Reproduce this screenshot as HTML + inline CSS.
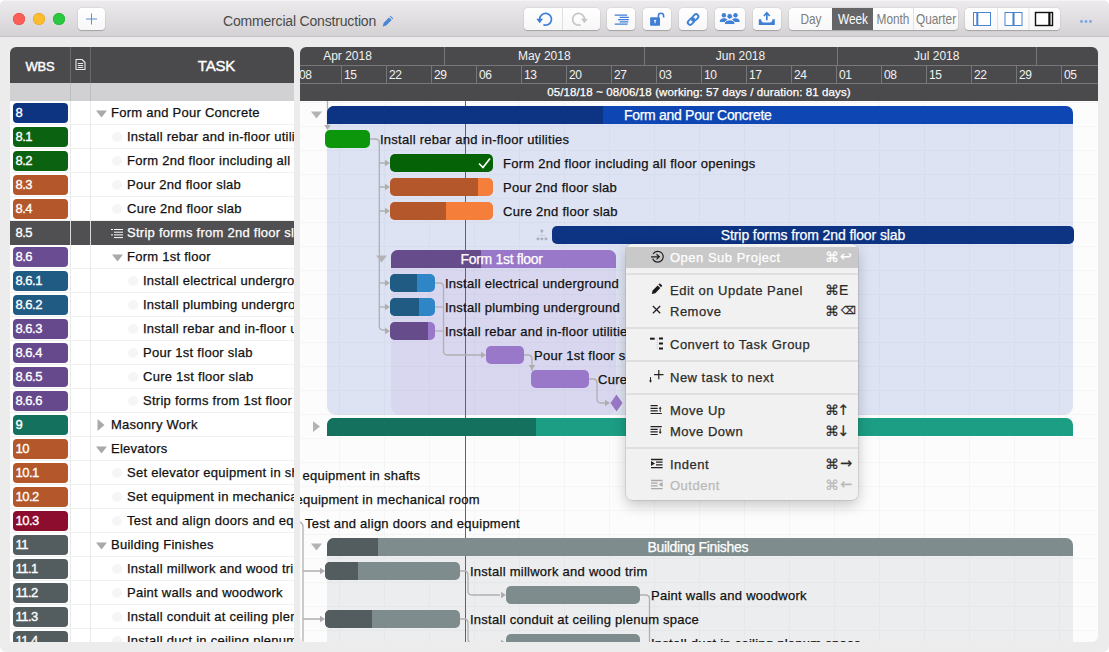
<!DOCTYPE html>
<html lang="en"><head><meta charset="utf-8"><title>Commercial Construction</title>
<style>
*{box-sizing:border-box;margin:0;padding:0}
html,body{width:1109px;height:652px;overflow:hidden;background:#fff}
body{font-family:"Liberation Sans",sans-serif;position:relative;-webkit-font-smoothing:antialiased}
#win{position:absolute;left:0;top:0;width:1109px;height:652px;background:#ececec;border-radius:6px;overflow:hidden}
#tb{position:absolute;left:0;top:0;width:1109px;height:37px;background:linear-gradient(#edebed,#d4d2d4);border-bottom:1px solid #c6c4c6;box-shadow:inset 0 1px 0 #f5f4f5}
.tl{position:absolute;top:12.700px;width:12.200px;height:12.200px;border-radius:50%}
.btn{position:absolute;top:8px;height:22px;background:linear-gradient(#ffffff,#f7f7f7);border-radius:4px;box-shadow:0 .5px 1px rgba(0,0,0,.22),0 0 0 .5px rgba(0,0,0,.06)}
.btn svg{position:absolute;left:0;top:0}
#title{position:absolute;left:223px;top:13px;font-size:14px;color:#4a4a4a;white-space:nowrap;letter-spacing:-.18px}
.seg{position:absolute;top:0;height:22px;line-height:21px;text-align:center;color:#7d7d7d;font-size:15px;white-space:nowrap}
.seg span{position:absolute;left:50%;top:0;transform:translateX(-50%) scaleX(.79);transform-origin:50% 50%}
#lp{position:absolute;left:10px;top:47px;width:284px;height:595px;background:#fff;overflow:hidden;border-radius:6px 6px 0 0}
#lh{position:absolute;left:0;top:0;width:284px;height:36px;background:#4a4a4c}
#lh2{position:absolute;left:0;top:36px;width:284px;height:18px;background:#d1d1d4}
.lrow{position:absolute;left:0;width:284px;height:24px;border-bottom:1px solid #f0f0f0}
.badge{position:absolute;left:3px;top:2px;width:55px;height:20px;border-radius:4px;color:#fff;font-size:13px;line-height:20px;padding-left:2.500px;letter-spacing:-.5px;-webkit-text-stroke:.35px #fff}
.tt{position:absolute;top:0;height:24px;line-height:24px;font-size:13px;color:#111;white-space:nowrap;letter-spacing:.26px;-webkit-text-stroke:.25px currentColor}
.circ{position:absolute;top:7px;width:10px;height:10px;border-radius:50%;background:#f5f5f5}
.vd{position:absolute;top:0;width:1px;background:#e9e9eb}
#gp{position:absolute;left:300px;top:47px;width:798px;height:595px;background:#fcfcfc;overflow:hidden;border-radius:6px 6px 6px 6px}
#gh{position:absolute;left:0;top:0;width:798px;height:54px;background:#4a4a4c}
.mon{position:absolute;top:0;height:18px;line-height:19px;font-size:12px;color:#f2f2f2;white-space:nowrap}
.wk{position:absolute;top:18px;height:18px;line-height:21px;font-size:12px;letter-spacing:-.3px;color:#f2f2f2;white-space:nowrap;border-left:1px solid #77777a;padding-left:2px}
.bar{position:absolute;height:18px;border-radius:5px;overflow:hidden}
.bar i{position:absolute;left:0;top:0;height:18px;display:block}
.gbar{position:absolute;height:18px;border-radius:7px 7px 0 0;overflow:hidden;padding-right:4px;color:#fff;font-size:14px;line-height:19px;text-align:center;white-space:nowrap}
.gbar i{position:absolute;left:0;top:0;height:18px;display:block}
.gbar b{position:relative;font-weight:normal;letter-spacing:-.3px;-webkit-text-stroke:.25px #fff}
.gl{position:absolute;height:24px;line-height:24px;font-size:13px;color:#111;white-space:nowrap;letter-spacing:.26px;-webkit-text-stroke:.25px currentColor}
#menu{position:absolute;left:626px;top:244px;width:232px;height:256px;background:#f1f1f1;border-radius:6px;box-shadow:0 0 0 .5px rgba(0,0,0,.16),0 5px 14px rgba(0,0,0,.22)}
.mi{position:absolute;left:0;width:232px;height:21px;line-height:21px;font-size:13px;color:#2b2b2b;white-space:nowrap}
.mi .t{position:absolute;left:44px;top:0;letter-spacing:.5px;-webkit-text-stroke:.25px currentColor}
.mi .k{position:absolute;left:199px;top:-.5px;font-size:14px;-webkit-text-stroke:.2px currentColor}
.mi .k u{text-decoration:none;font-family:"DejaVu Sans",sans-serif;font-size:14.500px;line-height:21px;position:relative;top:-.5px;font-weight:normal;-webkit-text-stroke:.2px currentColor;margin-left:1px}
.mi .k u.bs{font-size:10.500px;font-weight:normal;top:-1.500px;margin-left:2px;-webkit-text-stroke:.3px currentColor}
.mi .k u.rt{font-size:14px;top:-1px}
.mi .k u.v{margin-left:-2px;top:0}
.ms{position:absolute;left:0;width:232px;height:2px;background:#dfdfdf}
</style></head><body><div id="win">

<div id="tb">
<div class="tl" style="left:13.1px;background:#fc5f57;box-shadow:inset 0 0 0 .5px #e0443e"></div>
<div class="tl" style="left:33.1px;background:#fdbc2e;box-shadow:inset 0 0 0 .5px #dea123"></div>
<div class="tl" style="left:53.1px;background:#29c840;box-shadow:inset 0 0 0 .5px #1aab29"></div>
<div class="btn" style="left:78px;width:27px"><svg width="27" height="22"><path d="M13.500 5.500v11M8 11h11" stroke="#5a8fd9" stroke-width="1" fill="none"/></svg></div>
<div id="title">Commercial Construction</div>
<svg style="position:absolute;left:380.500px;top:14.500px" width="13" height="13" viewBox="0 0 13 13"><path d="M1.800 11.400l.8-3.400L8 2.400l2.700 2.700L5.200 10.600z" fill="#4a86d4"/><path d="M8.800 1.600l.8-.8 2.700 2.700-.8.800z" fill="#4a86d4"/></svg>
<div class="btn" style="left:524px;width:76px"><svg width="76" height="22"><path d="M38.500 0v22" stroke="#e0e0e0" stroke-width="1"/><path d="M15.70 11.30A5.9 5.9 0 1 1 19.39 16.77" stroke="#3f7fd6" stroke-width="1.700" fill="none"/><path d="M12.30 10.70h6.8l-3.4 4.6z" fill="#3f7fd6"/><path d="M60.40 11.30A5.9 5.9 0 1 0 56.71 16.77" stroke="#c6c6c6" stroke-width="1.700" fill="none"/><path d="M57.00 10.70h6.8l-3.4 4.6z" fill="#c6c6c6"/></svg></div>
<div class="btn" style="left:607px;width:28px"><svg width="28" height="22"><path d="M7.700 7.100H20.100M12.600 9.350H21.800M11 11.600H21.800M12.600 13.800H21.300M7.700 16H20.600" stroke="#3f7fd6" stroke-width="1.250" fill="none"/></svg></div>
<div class="btn" style="left:643px;width:28px"><svg width="28" height="22"><rect x="7.100" y="9.300" width="9.900" height="8.400" rx=".8" fill="#3f7fd6"/><path d="M15.400 9.500V7.800a2.600 2.600 0 0 1 5.200 0V9.600" stroke="#3f7fd6" stroke-width="1.600" fill="none"/><path d="M11 12h2.200v1h-.6v2.200h-1v-2.200h-.6z" fill="#fff"/></svg></div>
<div class="btn" style="left:679px;width:28px"><svg width="28" height="22"><g transform="rotate(-45 14.100 11.500)" stroke="#3f7fd6" stroke-width="1.900" fill="none"><rect x="7.600" y="9.200" width="7" height="4.600" rx="2.300"/><rect x="13.600" y="9.200" width="7" height="4.600" rx="2.300"/><path d="M12 11.500h4.200" stroke-width="1.900"/></g></svg></div>
<div class="btn" style="left:715px;width:30px"><svg width="30" height="22"><g fill="#3f7fd6" transform="translate(-.3 -.7)"><circle cx="9.200" cy="8" r="2.200"/><circle cx="20.800" cy="8" r="2.200"/><path d="M5 14.600c0-2.600 2-3.600 4.200-3.600s2.800.6 3.300 1.200v2.400z"/><path d="M25 14.600c0-2.600-2-3.600-4.200-3.600s-2.800.6-3.300 1.200v2.400z"/><circle cx="15" cy="9" r="2.800" stroke="#fbfbfb" stroke-width=".9"/><path d="M9.600 17.200c0-3.400 2.600-4.600 5.400-4.600s5.400 1.200 5.400 4.600z" stroke="#fbfbfb" stroke-width=".9"/></g></svg></div>
<div class="btn" style="left:753px;width:28px"><svg width="28" height="22"><path d="M13.800 12.300V5.500M10.900 8l2.900-3.200L16.700 8" stroke="#3f7fd6" stroke-width="1.700" fill="none"/><path d="M5.800 11.200h2.400q0 3.300 2.600 3.300h6q2.600 0 2.600-3.300h2.400v5.800h-16z" fill="#3f7fd6"/></svg></div>
<div class="btn" style="left:789px;width:169px;overflow:hidden"><div class="seg" style="left:0;width:43px"><span>Day</span></div><div class="seg" style="left:43px;width:41px;background:#656567;color:#fff"><span>Week</span></div><div class="seg" style="left:84px;width:41px;border-right:1px solid #e2e2e2"><span>Month</span></div><div class="seg" style="left:125px;width:44px"><span>Quarter</span></div></div>
<div class="btn" style="left:965px;width:95px"><svg width="95" height="22"><path d="M32.500 0v22M64 0v22" stroke="#e2e2e2" stroke-width="1"/><rect x="8.500" y="4.500" width="17" height="13" fill="#fff" stroke="#4a86d4" stroke-width="1"/><path d="M12.300 5v12" stroke="#3f7fd6" stroke-width="2"/><rect x="40" y="4.500" width="17" height="13" fill="#fff" stroke="#4a86d4" stroke-width="1"/><path d="M48.500 5v12" stroke="#3f7fd6" stroke-width="2"/><rect x="70.500" y="4.500" width="17" height="13" fill="#fff" stroke="#111" stroke-width="1.400"/><path d="M84.400 5v12" stroke="#111" stroke-width="2.200"/></svg></div>
<svg style="position:absolute;left:1078px;top:18px" width="16" height="6"><g fill="#76a8e8"><circle cx="3.500" cy="3.500" r="1.400"/><circle cx="8" cy="3.500" r="1.400"/><circle cx="12.500" cy="3.500" r="1.400"/></g></svg>
</div>
<div id="lp"><div id="lh"></div><div id="lh2"></div>
<div style="position:absolute;left:0;top:0;width:60px;height:36px;line-height:40px;text-align:center;color:#fff;font-size:13px;-webkit-text-stroke:.4px #fff;letter-spacing:-.2px">WBS</div>
<div style="position:absolute;left:156px;top:0;width:101px;height:36px;line-height:38px;text-align:center;color:#fff;font-size:15px;-webkit-text-stroke:.4px #fff;letter-spacing:-.2px">TASK</div>
<svg style="position:absolute;left:64px;top:11px" width="13" height="13" viewBox="0 0 13 13"><path d="M2 1.500h6l3 3v7h-9z" fill="none" stroke="#e8e8e8" stroke-width="1.100" stroke-linejoin="round"/><path d="M3.800 5.500h5.400M3.800 7.500h5.400M3.800 9.500h5.400" stroke="#e8e8e8" stroke-width="1"/></svg>
<div class="vd" style="left:60px;height:36px;background:#6a6a6c"></div><div class="vd" style="left:80px;height:36px;background:#6a6a6c"></div>
<div class="vd" style="left:60px;top:36px;height:18px;background:#bcbcc0"></div><div class="vd" style="left:80px;top:36px;height:18px;background:#bcbcc0"></div>
<div class="vd" style="left:60px;top:54px;height:541px"></div><div class="vd" style="left:80px;top:54px;height:541px"></div>
<div class="lrow" style="top:54px">
<div class="badge" style="background:#0d3481">8</div>
<svg style="position:absolute;left:85.7px;top:8.800px" width="11" height="8"><path d="M0 .5h11L5.500 7.500z" fill="#a9a9a9"/></svg>
<div class="tt" style="left:101px">Form and Pour Concrete</div>
</div>
<div class="lrow" style="top:78px">
<div class="badge" style="background:#0b6311">8.1</div>
<div class="circ" style="left:102px"></div>
<div class="tt" style="left:117px">Install rebar and in-floor utilities</div>
</div>
<div class="lrow" style="top:102px">
<div class="badge" style="background:#0b6311">8.2</div>
<div class="circ" style="left:102px"></div>
<div class="tt" style="left:117px">Form 2nd floor including all floor openings</div>
</div>
<div class="lrow" style="top:126px">
<div class="badge" style="background:#b4572b">8.3</div>
<div class="circ" style="left:102px"></div>
<div class="tt" style="left:117px">Pour 2nd floor slab</div>
</div>
<div class="lrow" style="top:150px">
<div class="badge" style="background:#b4572b">8.4</div>
<div class="circ" style="left:102px"></div>
<div class="tt" style="left:117px">Cure 2nd floor slab</div>
</div>
<div class="lrow" style="top:174px;background:#505052;border-bottom-color:#505052">
<div class="badge" style="background:none">8.5</div>
<div class="vd" style="left:60px;height:24px;background:#d8d8d8"></div><div class="vd" style="left:80px;height:24px;background:#d8d8d8"></div>
<svg style="position:absolute;left:101px;top:7px" width="12" height="11"><path d="M3 1.500h9M3 4.200h9M3 6.900h9M3 9.600h9" stroke="#fff" stroke-width="1"/><path d="M0 1.500h2M0 6.900h2" stroke="#fff" stroke-width="1"/></svg>
<div class="tt" style="left:117px;color:#fff">Strip forms from 2nd floor slab</div>
</div>
<div class="lrow" style="top:198px">
<div class="badge" style="background:#6a4c93">8.6</div>
<svg style="position:absolute;left:101.7px;top:8.800px" width="11" height="8"><path d="M0 .5h11L5.500 7.500z" fill="#a9a9a9"/></svg>
<div class="tt" style="left:117px">Form 1st floor</div>
</div>
<div class="lrow" style="top:222px">
<div class="badge" style="background:#1f5b83">8.6.1</div>
<div class="circ" style="left:118px"></div>
<div class="tt" style="left:133px">Install electrical underground</div>
</div>
<div class="lrow" style="top:246px">
<div class="badge" style="background:#1f5b83">8.6.2</div>
<div class="circ" style="left:118px"></div>
<div class="tt" style="left:133px">Install plumbing underground</div>
</div>
<div class="lrow" style="top:270px">
<div class="badge" style="background:#66498c">8.6.3</div>
<div class="circ" style="left:118px"></div>
<div class="tt" style="left:133px">Install rebar and in-floor utilities</div>
</div>
<div class="lrow" style="top:294px">
<div class="badge" style="background:#66498c">8.6.4</div>
<div class="circ" style="left:118px"></div>
<div class="tt" style="left:133px">Pour 1st floor slab</div>
</div>
<div class="lrow" style="top:318px">
<div class="badge" style="background:#66498c">8.6.5</div>
<div class="circ" style="left:118px"></div>
<div class="tt" style="left:133px">Cure 1st floor slab</div>
</div>
<div class="lrow" style="top:342px">
<div class="badge" style="background:#66498c">8.6.6</div>
<div class="circ" style="left:118px"></div>
<div class="tt" style="left:133px">Strip forms from 1st floor slab</div>
</div>
<div class="lrow" style="top:366px">
<div class="badge" style="background:#13715d">9</div>
<svg style="position:absolute;left:87px;top:6px" width="8" height="12"><path d="M.5 0v12L7.500 6z" fill="#a9a9a9"/></svg>
<div class="tt" style="left:101px">Masonry Work</div>
</div>
<div class="lrow" style="top:390px">
<div class="badge" style="background:#b4572b">10</div>
<svg style="position:absolute;left:85.7px;top:8.800px" width="11" height="8"><path d="M0 .5h11L5.500 7.500z" fill="#a9a9a9"/></svg>
<div class="tt" style="left:101px">Elevators</div>
</div>
<div class="lrow" style="top:414px">
<div class="badge" style="background:#b4572b">10.1</div>
<div class="circ" style="left:102px"></div>
<div class="tt" style="left:117px">Set elevator equipment in shafts</div>
</div>
<div class="lrow" style="top:438px">
<div class="badge" style="background:#b4572b">10.2</div>
<div class="circ" style="left:102px"></div>
<div class="tt" style="left:117px">Set equipment in mechanical room</div>
</div>
<div class="lrow" style="top:462px">
<div class="badge" style="background:#8c0d2e">10.3</div>
<div class="circ" style="left:102px"></div>
<div class="tt" style="left:117px">Test and align doors and equipment</div>
</div>
<div class="lrow" style="top:486px">
<div class="badge" style="background:#535d5f">11</div>
<svg style="position:absolute;left:85.7px;top:8.800px" width="11" height="8"><path d="M0 .5h11L5.500 7.500z" fill="#a9a9a9"/></svg>
<div class="tt" style="left:101px">Building Finishes</div>
</div>
<div class="lrow" style="top:510px">
<div class="badge" style="background:#535d5f">11.1</div>
<div class="circ" style="left:102px"></div>
<div class="tt" style="left:117px">Install millwork and wood trim</div>
</div>
<div class="lrow" style="top:534px">
<div class="badge" style="background:#535d5f">11.2</div>
<div class="circ" style="left:102px"></div>
<div class="tt" style="left:117px">Paint walls and woodwork</div>
</div>
<div class="lrow" style="top:558px">
<div class="badge" style="background:#535d5f">11.3</div>
<div class="circ" style="left:102px"></div>
<div class="tt" style="left:117px">Install conduit at ceiling plenum space</div>
</div>
<div class="lrow" style="top:582px">
<div class="badge" style="background:#535d5f">11.4</div>
<div class="circ" style="left:102px"></div>
<div class="tt" style="left:117px">Install duct in ceiling plenum space</div>
</div>
</div>
<div id="gp">
<div style="position:absolute;left:0;top:54px;width:798px;height:541px;background-image:linear-gradient(90deg,#f5f5f5 1px,transparent 1px),linear-gradient(#f5f5f5 1px,transparent 1px);background-size:45px 24px,45px 24px;background-position:39px 0,0 1px"></div>
<div style="position:absolute;left:26.5px;top:68px;width:746.500px;height:299.500px;background:rgba(80,105,200,.17);border-radius:9px"></div>
<div style="position:absolute;left:91px;top:212px;width:225px;height:155.500px;background:rgba(150,100,200,.09);border-radius:9px"></div>
<div style="position:absolute;left:26.5px;top:500px;width:746.500px;height:120px;background:rgba(100,110,115,.10);border-radius:9px"></div>
<div style="position:absolute;left:165px;top:54px;width:1.100px;height:541px;background:#df2c3c"></div>
<svg style="position:absolute;left:0;top:0" width="798" height="595" viewBox="300 47 798 595"><g fill="none" stroke="#b0b0b0" stroke-width="1.300"><path d="M327.5 101V128"/><path d="M324.3 125L327.5 130L330.7 125z" fill="#adadad" stroke="none"/><path d="M370 139h5.300q4 0 4 4V326q0 4 4 4h4"/><path d="M379.300 163h6"/><path d="M385 159.8L390 163L385 166.2z" fill="#adadad" stroke="none"/><path d="M379.300 187h6"/><path d="M385 183.8L390 187L385 190.2z" fill="#adadad" stroke="none"/><path d="M379.300 211h6"/><path d="M385 207.8L390 211L385 214.2z" fill="#adadad" stroke="none"/><path d="M379.300 283h6"/><path d="M385 279.8L390 283L385 286.2z" fill="#adadad" stroke="none"/><path d="M379.300 307h6"/><path d="M385 303.8L390 307L385 310.2z" fill="#adadad" stroke="none"/><path d="M385 327.8L390 331L385 334.2z" fill="#adadad" stroke="none"/><path d="M435 283h4.500q4 0 4 4V351q0 4 4 4h34"/><path d="M481 351.8L486 355L481 358.2z" fill="#adadad" stroke="none"/><path d="M435 307h9"/><path d="M435 331h9"/><path d="M524 355h4q4 0 4 4v12"/><path d="M528.8 365L532 370L535.2 365z" fill="#adadad" stroke="none"/><path d="M589 379h4q4 0 4 4v16q0 4 4 4h4"/><path d="M605 399.8L610 403L605 406.2z" fill="#adadad" stroke="none"/><path d="M300 522q3 1 3 5V652"/><path d="M303 571h17"/><path d="M320 567.8L325 571L320 574.2z" fill="#adadad" stroke="none"/><path d="M303 619h17"/><path d="M320 615.8L325 619L320 622.2z" fill="#adadad" stroke="none"/><path d="M460 571h4q4 0 4 4v16q0 4 4 4h28"/><path d="M501 591.8L506 595L501 598.2z" fill="#adadad" stroke="none"/><path d="M460 619h4q4 0 4 4v16q0 4 4 4h28"/><path d="M501 639.8L506 643L501 646.2z" fill="#adadad" stroke="none"/><path d="M640 595h5.5q4 0 4 4V652"/></g></svg>
<div class="gbar" style="left:26.5px;top:59px;width:746.5px;background:#0e47b4"><i style="width:276.5px;background:#0d3483"></i><b>Form and Pour Concrete</b></div>
<svg style="position:absolute;left:11px;top:64px" width="11" height="8"><path d="M0 .5h11L5.500 7.500z" fill="#b3b3b3"/></svg>
<div class="bar" style="left:25px;top:83px;width:45px;background:#0c960c"></div>
<div class="gl" style="left:80px;top:80.5px">Install rebar and in-floor utilities</div>
<div class="bar" style="left:90px;top:107px;width:103px;background:#066206"><svg style="position:absolute;left:88px;top:3px" width="13" height="12"><path d="M1 6.500l4 4L12 1.500" stroke="#fff" stroke-width="1.700" fill="none"/></svg></div>
<div class="gl" style="left:203px;top:104.5px">Form 2nd floor including all floor openings</div>
<div class="bar" style="left:90px;top:131px;width:103px;background:#f47e3a"><i style="width:88px;background:#b4572b"></i></div>
<div class="gl" style="left:203px;top:128.5px">Pour 2nd floor slab</div>
<div class="bar" style="left:90px;top:155px;width:103px;background:#f47e3a"><i style="width:56px;background:#b4572b"></i></div>
<div class="gl" style="left:203px;top:152.5px">Cure 2nd floor slab</div>
<div class="bar" style="left:252px;top:179px;width:522px;background:#0d3483;color:#fff;font-size:14px;line-height:19px;text-align:center;-webkit-text-stroke:.25px #fff;letter-spacing:-.1px">Strip forms from 2nd floor slab</div>
<svg style="position:absolute;left:236px;top:182px" width="12" height="12"><g fill="#aeb0bc"><rect x="4.500" y=".6" width="2.800" height="2.800" rx=".8"/><rect x=".6" y="8.500" width="2.800" height="2.800" rx=".8"/><rect x="4.500" y="8.500" width="2.800" height="2.800" rx=".8"/><rect x="8.600" y="8.500" width="2.800" height="2.800" rx=".8"/><rect x="5.600" y="3.500" width=".6" height="3" opacity=".5"/><rect x="2" y="6.300" width="8" height=".6" opacity=".5"/></g></svg>
<div class="gbar" style="left:91px;top:203px;width:225px;background:#9a78c9"><i style="width:90px;background:#674c8c"></i><b>Form 1st floor</b></div>
<svg style="position:absolute;left:76px;top:208px" width="11" height="8"><path d="M0 .5h11L5.500 7.500z" fill="#b3b3b3"/></svg>
<div class="bar" style="left:90px;top:227px;width:45px;background:#2f86c6"><i style="width:27px;background:#1f5b83"></i></div>
<div class="gl" style="left:145px;top:224.5px">Install electrical underground</div>
<div class="bar" style="left:90px;top:251px;width:45px;background:#2f86c6"><i style="width:29px;background:#1f5b83"></i></div>
<div class="gl" style="left:145px;top:248.5px">Install plumbing underground</div>
<div class="bar" style="left:90px;top:275px;width:45px;background:#9a78c9"><i style="width:38px;background:#674c8c"></i></div>
<div class="gl" style="left:145px;top:272.5px">Install rebar and in-floor utilities</div>
<div class="bar" style="left:186px;top:299px;width:38px;background:#9a78c9"></div>
<div class="gl" style="left:234px;top:296.5px">Pour 1st floor slab</div>
<div class="bar" style="left:231px;top:323px;width:58px;background:#9a78c9"></div>
<div class="gl" style="left:298px;top:320.5px">Cure 1st floor slab</div>
<svg style="position:absolute;left:310px;top:347px" width="13" height="18"><path d="M6.500 .5L12.500 9L6.500 17.500L.5 9z" fill="#9a78c9"/></svg>
<div class="gbar" style="left:26.5px;top:371px;width:746.5px;background:#1c9e84"><i style="width:209.5px;background:#13715d"></i><b></b></div>
<svg style="position:absolute;left:13px;top:374px" width="8" height="12"><path d="M0 .3v10.600L7 5.600z" fill="#b3b3b3"/></svg>
<div class="gl" style="left:2.5px;top:416.5px">equipment in shafts</div>
<div class="gl" style="left:-4.600000000000023px;top:440.5px">equipment in mechanical room</div>
<div class="gl" style="left:5px;top:464.5px">Test and align doors and equipment</div>
<div class="gbar" style="left:26.5px;top:491px;width:746.5px;background:#7f8c8e"><i style="width:51.5px;background:#535d5f"></i><b>Building Finishes</b></div>
<svg style="position:absolute;left:11px;top:496px" width="11" height="8"><path d="M0 .5h11L5.500 7.500z" fill="#b3b3b3"/></svg>
<div class="bar" style="left:25px;top:515px;width:135px;background:#7f8c8e"><i style="width:33px;background:#535d5f"></i></div>
<div class="gl" style="left:170px;top:512.5px">Install millwork and wood trim</div>
<div class="bar" style="left:206px;top:539px;width:134px;background:#7f8c8e"></div>
<div class="gl" style="left:351px;top:536.5px">Paint walls and woodwork</div>
<div class="bar" style="left:25px;top:563px;width:135px;background:#7f8c8e"><i style="width:47px;background:#535d5f"></i></div>
<div class="gl" style="left:170px;top:560.5px">Install conduit at ceiling plenum space</div>
<div class="bar" style="left:206px;top:587px;width:134px;background:#7f8c8e"></div>
<div class="gl" style="left:351px;top:584.5px">Install duct in ceiling plenum space</div>
<div id="gh">
<div style="position:absolute;left:0;top:18px;width:798px;height:1px;background:#77777a"></div>
<div style="position:absolute;left:0;top:36px;width:798px;height:1px;background:#77777a"></div>
<div class="mon" style="left:-49px;width:193px;text-align:center">Apr 2018</div>
<div class="mon" style="left:144px;width:199.5px;border-left:1px solid #77777a;text-align:center">May 2018</div>
<div class="mon" style="left:343.5px;width:193.0px;border-left:1px solid #77777a;text-align:center">Jun 2018</div>
<div class="mon" style="left:536.5px;width:199.5px;border-left:1px solid #77777a;text-align:center">Jul 2018</div>
<div class="mon" style="left:736px;width:199px;border-left:1px solid #77777a;text-align:center">Aug 2018</div>
<div class="mon" style="left:23px;width:50px;text-align:left"></div>
<div class="wk" style="left:-4px;width:45px">08</div>
<div class="wk" style="left:41px;width:45px">15</div>
<div class="wk" style="left:86px;width:45px">22</div>
<div class="wk" style="left:131px;width:45px">29</div>
<div class="wk" style="left:176px;width:45px">06</div>
<div class="wk" style="left:221px;width:45px">13</div>
<div class="wk" style="left:266px;width:45px">20</div>
<div class="wk" style="left:311px;width:45px">27</div>
<div class="wk" style="left:356px;width:45px">03</div>
<div class="wk" style="left:401px;width:45px">10</div>
<div class="wk" style="left:446px;width:45px">17</div>
<div class="wk" style="left:491px;width:45px">24</div>
<div class="wk" style="left:536px;width:45px">01</div>
<div class="wk" style="left:581px;width:45px">08</div>
<div class="wk" style="left:626px;width:45px">15</div>
<div class="wk" style="left:671px;width:45px">22</div>
<div class="wk" style="left:716px;width:45px">29</div>
<div class="wk" style="left:761px;width:45px">05</div>
<div style="position:absolute;left:0;top:37px;width:798px;height:17px;line-height:17px;font-size:11.500px;color:#fff;text-align:center;white-space:nowrap;-webkit-text-stroke:.25px #fff;letter-spacing:.1px">05/18/18 ~ 08/06/18 (working: 57 days / duration: 81 days)</div>
</div>
</div>
<div id="menu">
<div style="position:absolute;left:0;top:3px;width:232px;height:21px;background:#c9c9c9"></div>
<div class="mi" style="top:3px;color:#fff;"><svg style="position:absolute;left:23px;top:3px;overflow:visible" width="15" height="14"><circle cx="8.800" cy="6.700" r="5.400" fill="none" stroke="#222" stroke-width="1.200" stroke-dasharray="28.400 5.500" stroke-dashoffset="-2.750" transform="rotate(180 8.800 6.700)"/><path d="M2 6.800h8.200M7.500 4.200L10.400 6.800 7.500 9.400" fill="none" stroke="#222" stroke-width="1.200"/></svg><span class="t">Open Sub Project</span><span class="k">⌘<u class="rt">↩</u></span></div>
<div class="mi" style="top:36px;"><svg style="position:absolute;left:23px;top:3px;overflow:visible" width="15" height="14"><path d="M2.800 11.100l.8-3.500 5-5.200 2.700 2.600-5 5.200z" fill="#1a1a1a"/><path d="M9.400 1.600l.9-.9q.5-.5 1 0l1.600 1.600q.5.500 0 1l-.9.900z" fill="#1a1a1a"/></svg><span class="t">Edit on Update Panel</span><span class="k">⌘E</span></div>
<div class="mi" style="top:57px;"><svg style="position:absolute;left:23px;top:3px;overflow:visible" width="15" height="14"><path d="M3.900 2l7.300 7.300M11.200 2L3.900 9.300" stroke="#222" stroke-width="1.250"/></svg><span class="t">Remove</span><span class="k">⌘<u class="bs">⌫</u></span></div>
<div class="mi" style="top:90px;"><svg style="position:absolute;left:23px;top:3px;overflow:visible" width="15" height="14"><path d="M1 1.700h4.700" stroke="#1a1a1a" stroke-width="2"/><path d="M10 1.600h4M10 6.500h4M10 11.400h4" stroke="#1a1a1a" stroke-width="2"/><path d="M8.200 1v11" stroke="#bbb" stroke-width=".8" stroke-dasharray="1 1"/></svg><span class="t">Convert to Task Group</span><span class="k"></span></div>
<div class="mi" style="top:123px;"><svg style="position:absolute;left:23px;top:3px;overflow:visible" width="15" height="14"><path d="M9.800 -.1v9.400M5.100 4.600h9.400" stroke="#222" stroke-width="1.200"/><path d="M1.500 7.100v4.500" stroke="#222" stroke-width="1"/><path d="M0 10.500h3l-1.500 2.300z" fill="#222"/></svg><span class="t">New task to next</span><span class="k"></span></div>
<div class="mi" style="top:156px;"><svg style="position:absolute;left:23px;top:3px;overflow:visible" width="15" height="14"><path d="M1.500 2.700h7.200M1.500 5.300h7.200M1.500 7.900h7.200M1.500 10.500h11.300" stroke="#222" stroke-width="1.200"/><path d="M11.200 9v-4" stroke="#222" stroke-width="1"/><path d="M9.700 5.800h3L11.200 3.500z" fill="#222"/></svg><span class="t">Move Up</span><span class="k">⌘<u class="v">↑</u></span></div>
<div class="mi" style="top:177px;"><svg style="position:absolute;left:23px;top:3px;overflow:visible" width="15" height="14"><path d="M1.500 2.700h11.300M1.500 5.300h7.200M1.500 7.900h7.200M1.500 10.500h7.200" stroke="#222" stroke-width="1.200"/><path d="M11.200 4.500v4" stroke="#222" stroke-width="1"/><path d="M9.700 7.700h3L11.200 10z" fill="#222"/></svg><span class="t">Move Down</span><span class="k">⌘<u class="v">↓</u></span></div>
<div class="mi" style="top:210px;"><svg style="position:absolute;left:23px;top:3px;overflow:visible" width="15" height="14"><path d="M2 2.500h11.600M7 5.200h6.600M7 7.900h6.600M2 10.600h11.600" stroke="#222" stroke-width="1.300"/><path d="M2 4l4 2.500-4 2.500z" fill="#222"/></svg><span class="t">Indent</span><span class="k">⌘<u>→</u></span></div>
<div class="mi" style="top:231px;color:#b9b9b9;"><svg style="position:absolute;left:23px;top:3px;overflow:visible" width="15" height="14" opacity=".35"><path d="M2 2.500h11.600M2 5.200h6.600M2 7.900h6.600M2 10.600h11.600" stroke="#222" stroke-width="1.300"/><path d="M13.600 4l-4 2.500 4 2.500z" fill="#222"/></svg><span class="t">Outdent</span><span class="k">⌘<u>←</u></span></div>
<div class="ms" style="top:29px"></div>
<div class="ms" style="top:83px"></div>
<div class="ms" style="top:116px"></div>
<div class="ms" style="top:149px"></div>
<div class="ms" style="top:203px"></div>
</div>
</div></body></html>
